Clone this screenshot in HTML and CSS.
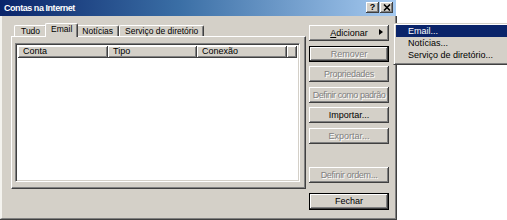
FILE: index.html
```html
<!DOCTYPE html>
<html>
<head>
<meta charset="utf-8">
<link rel="stylesheet" href="styles.css">
</head>
<body>
<div class="dialog">
  <div class="titlebar">
    <span class="title">Contas na Internet</span>
    <div class="tb-buttons">
      <span class="tbtn help">?</span>
      <span class="tbtn close"><svg width="8" height="7" viewBox="0 0 8 7"><path d="M1 0.5 L7 6.5 M7 0.5 L1 6.5" stroke="#000" stroke-width="1.6"/></svg></span>
    </div>
  </div>
  <div class="body">
    <div class="left">
      <div class="tabs">
        <div class="tab first">Tudo</div>
        <div class="tab active">Email</div>
        <div class="tab">Notícias</div>
        <div class="tab">Serviço de diretório</div>
      </div>
      <div class="panel">
        <div class="list">
          <div class="header">
            <div class="col c1">Conta</div>
            <div class="col c2">Tipo</div>
            <div class="col c3">Conexão</div>
            <div class="col c4"></div>
          </div>
        </div>
      </div>
    </div>
    <div class="buttons">
      <div class="btn add"><span><u>A</u>dicionar</span><i class="arrow"></i></div>
      <div class="btn disabled framed">Remover</div>
      <div class="btn disabled tight">Propriedades</div>
      <div class="btn disabled tighter">Definir como padrão</div>
      <div class="btn">Importar...</div>
      <div class="btn disabled">Exportar...</div>
      <div class="btn disabled tight order">Definir ordem...</div>
      <div class="btn close-btn">Fechar</div>
    </div>
  </div>
</div>
<div class="menu">
  <div class="item sel">Email...</div>
  <div class="item">Notícias...</div>
  <div class="item">Serviço de diretório...</div>
</div>
</body>
</html>
```
FILE: styles.css
```css
html, body {
  margin: 0;
  padding: 0;
  background: #fff;
  overflow: hidden;
  width: 507px;
  height: 220px;
}
body {
  position: relative;
  font-family: "Liberation Sans", Arial, sans-serif;
  font-size: 9px;
  color: #000;
}
.dialog {
  width: 396px;
  height: 219px;
  display: flex;
  flex-direction: column;
  background: #d4d0c8;
}
.titlebar {
  height: 16px;
  flex: none;
  background: linear-gradient(to right, #0a246a 0%, #3a6ea5 45%, #a6caf0 100%);
  display: flex;
  align-items: center;
  justify-content: space-between;
  padding: 0 3px 0 4px;
}
.title {
  color: #fff;
  font-weight: bold;
  font-size: 9px;
  letter-spacing: -0.45px;
}
.tb-buttons {
  display: flex;
  margin-top: -1px;
}
.tbtn {
  width: 13px;
  height: 11px;
  box-sizing: border-box;
  background: #d4d0c8;
  box-shadow: inset -1px -1px #404040, inset 1px 1px #fff, inset -2px -2px #808080;
  display: flex;
  align-items: center;
  justify-content: center;
  font-weight: bold;
  font-size: 9px;
  line-height: 1;
}
.tbtn.help {
  margin-right: 1px;
  padding-bottom: 1px;
}
.body {
  flex: 1;
  display: flex;
  border-left: 2px solid #f4f3ef;
  border-right: 1px solid #808080;
  border-bottom: 1px solid #808080;
  box-shadow: 1px 0 #404040, 0 1px #404040, 1px 1px #404040;
  padding: 7px 0 0 9px;
}
.left {
  width: 295px;
  display: flex;
  flex-direction: column;
}
.tabs {
  height: 13px;
  display: flex;
  align-items: flex-end;
  padding-left: 3px;
  position: relative;
  z-index: 1;
}
.tab {
  height: 11px;
  box-sizing: border-box;
  padding: 0 5px;
  font-size: 8.5px;
  line-height: 10px;
  border-left: 1px solid #fff;
  border-top: 1px solid #fff;
  border-right: 1px solid #404040;
  box-shadow: inset -1px 0 #808080;
  border-radius: 2px 2px 0 0;
  background: #d4d0c8;
  white-space: nowrap;
}
.tab.first {
  padding: 0 6px;
}
.tab.active {
  height: 14px;
  margin: 0 -2px -1px -2px;
  padding: 0 5px;
  line-height: 11px;
  position: relative;
  z-index: 2;
}
.panel {
  flex: none;
  height: 153px;
  box-sizing: border-box;
  border-left: 1px solid #fff;
  border-top: 1px solid #fff;
  border-right: 1px solid #404040;
  border-bottom: 1px solid #404040;
  box-shadow: inset -1px -1px #808080;
  padding: 6px 5px 6px 3px;
  display: flex;
}
.list {
  flex: 1;
  background: #fff;
  border-top: 1px solid #808080;
  border-left: 1px solid #808080;
  border-right: 1px solid #fff;
  border-bottom: 1px solid #fff;
  box-shadow: inset 1px 1px #404040, inset -1px -1px #d4d0c8;
  padding: 2px 2px 0 2px;
}
.header {
  display: flex;
  height: 12px;
}
.col {
  box-sizing: border-box;
  height: 12px;
  line-height: 11px;
  padding-left: 5px;
  background: #d4d0c8;
  box-shadow: inset -1px -1px #404040, inset 1px 1px #fff, inset -2px -2px #808080;
}
.c1 { width: 90px; }
.c2 { width: 89px; }
.c3 { width: 90px; }
.c4 { flex: 1; }
.buttons {
  width: 80px;
  margin-left: 3px;
  padding-top: 2px;
  display: flex;
  flex-direction: column;
  gap: 4.6px;
}
.btn {
  height: 16px;
  flex: none;
  box-sizing: border-box;
  background: #d4d0c8;
  box-shadow: inset -1px -1px #404040, inset 1px 1px #fff, inset -2px -2px #808080;
  display: flex;
  align-items: center;
  justify-content: center;
  white-space: nowrap;
  position: relative;
}
.btn.framed {
  border: 1px solid #000;
}
.btn.disabled {
  color: #808080;
  text-shadow: 1px 1px #fff;
}
.btn.tight {
  letter-spacing: -0.3px;
}
.btn.tighter {
  letter-spacing: -0.45px;
}
.btn.add .arrow {
  position: absolute;
  right: 6px;
  top: 4px;
  width: 0;
  height: 0;
  border-top: 3.5px solid transparent;
  border-bottom: 3.5px solid transparent;
  border-left: 4px solid #000;
}
.btn.order {
  margin-top: 18px;
}
.btn.close-btn {
  margin-top: 5.5px;
  height: 17px;
  border: 1px solid #000;
}
.menu {
  position: absolute;
  left: 393px;
  top: 23px;
  width: 120px;
  box-sizing: border-box;
  background: #d4d0c8;
  border-top: 1px solid #d4d0c8;
  border-left: 1px solid #d4d0c8;
  border-right: 1px solid #404040;
  border-bottom: 1px solid #404040;
  box-shadow: inset 1px 1px #fff, inset -1px -1px #808080;
  padding: 1px 2px 3px 2px;
  z-index: 5;
}
.item {
  height: 12px;
  line-height: 12px;
  padding-left: 12px;
  white-space: nowrap;
}
.item.sel {
  background: #0a246a;
  color: #fff;
}
```
